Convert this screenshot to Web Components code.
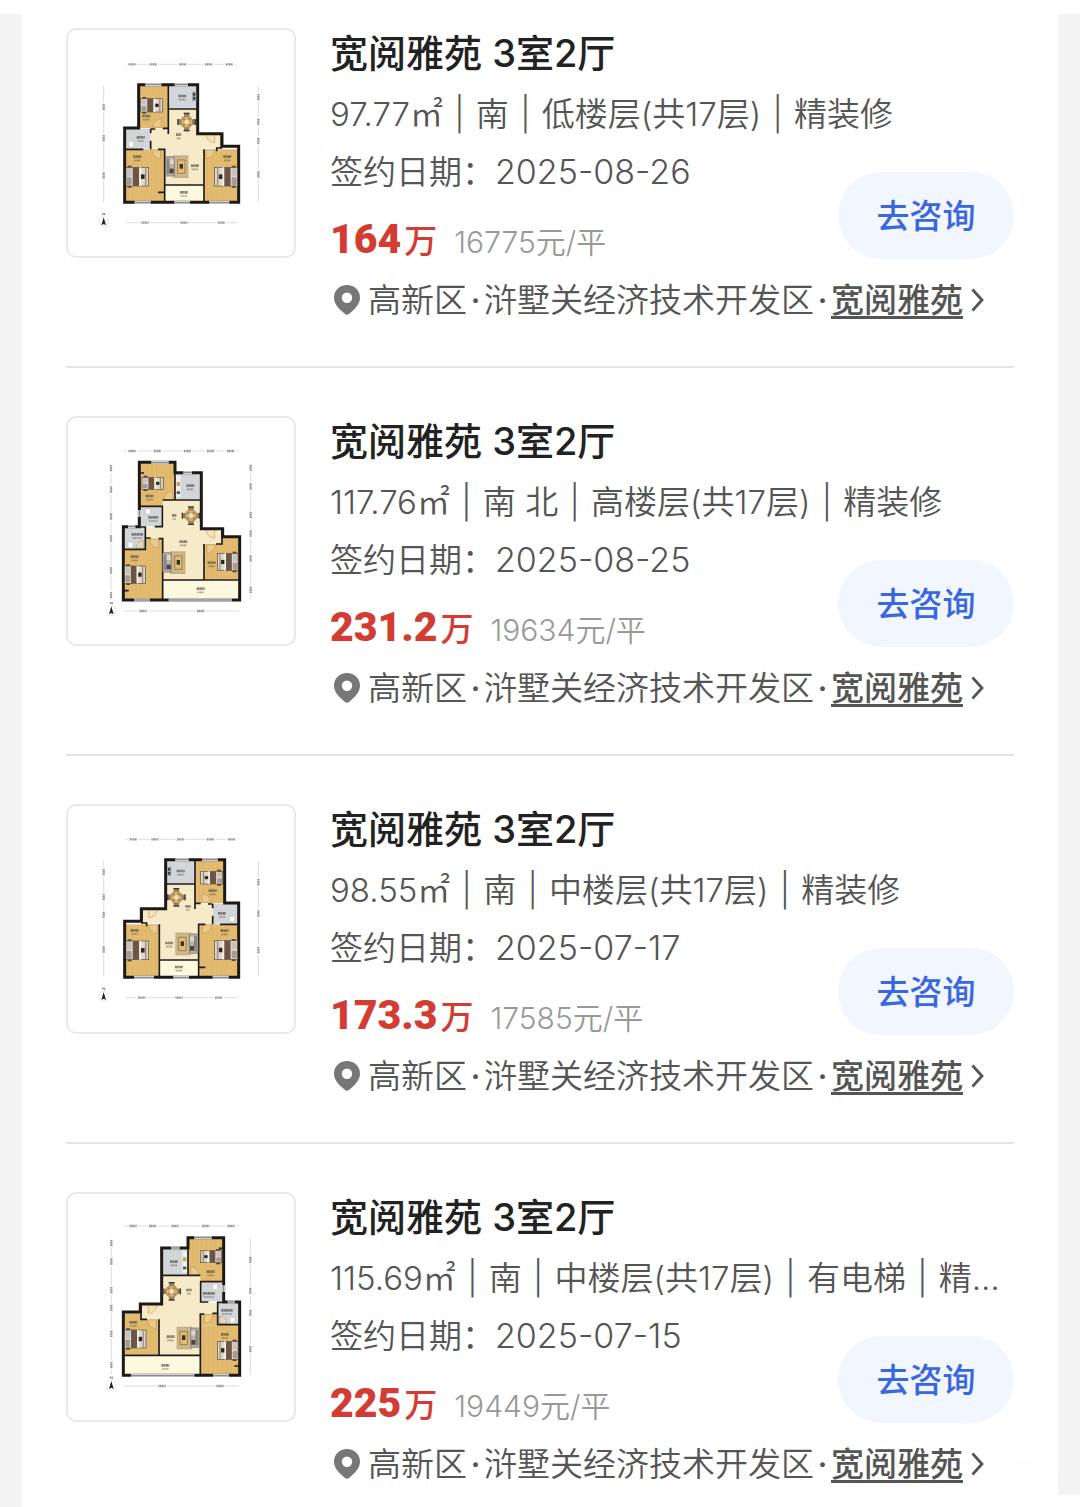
<!DOCTYPE html>
<html lang="zh-CN">
<head>
<meta charset="utf-8">
<meta name="viewport" content="width=device-width, initial-scale=1">
<title>宽阅雅苑 成交记录</title>
<style>
  body { margin: 0; background: #fff; font-family: Inter, "Noto Sans CJK SC", sans-serif; color: #555; }
  i { font-style: normal; padding: 0 2px; }
</style>
</head>
<body>
<deal-list>
  <deal-card plan="a">
    <span slot="title">宽阅雅苑 3室2厅</span>
    <span slot="spec">97.77㎡ <i>|</i> 南 <i>|</i> 低楼层(共17层) <i>|</i> 精装修</span>
    <span slot="date">2025-08-26</span>
    <span slot="price">164</span>
    <span slot="unit">16775元/平</span>
  </deal-card>
  <deal-card plan="b">
    <span slot="title">宽阅雅苑 3室2厅</span>
    <span slot="spec">117.76㎡ <i>|</i> 南 北 <i>|</i> 高楼层(共17层) <i>|</i> 精装修</span>
    <span slot="date">2025-08-25</span>
    <span slot="price">231.2</span>
    <span slot="unit">19634元/平</span>
  </deal-card>
  <deal-card plan="c">
    <span slot="title">宽阅雅苑 3室2厅</span>
    <span slot="spec">98.55㎡ <i>|</i> 南 <i>|</i> 中楼层(共17层) <i>|</i> 精装修</span>
    <span slot="date">2025-07-17</span>
    <span slot="price">173.3</span>
    <span slot="unit">17585元/平</span>
  </deal-card>
  <deal-card plan="d">
    <span slot="title">宽阅雅苑 3室2厅</span>
    <span slot="spec">115.69㎡ <i>|</i> 南 <i>|</i> 中楼层(共17层) <i>|</i> 有电梯 <i>|</i> 精装修</span>
    <span slot="date">2025-07-15</span>
    <span slot="price">225</span>
    <span slot="unit">19449元/平</span>
  </deal-card>
</deal-list>
<floating-panel></floating-panel>

<template id="list-tpl">
  <style>
    :host { display: block; padding-top: 14px; }
    .frame { background: #f4f4f5; padding: 0 22px; }
    .sheet { background: #fff; padding: 14px 44px 22px; display: flex; flex-direction: column; gap: 48px; }
  </style>
  <div class="frame"><main class="sheet"><slot></slot></main></div>
</template>

<template id="card-tpl">
  <style>
    :host { display: block; padding-bottom: 45px; border-bottom: 2px solid #e3e3e3; }
    :host(:last-child) { padding-bottom: 0; border-bottom: 0; }
    article { display: flex; gap: 34px; align-items: flex-start; }
    .body { flex: 1; min-width: 0; font-size: 33px; font-weight: 350; line-height: 58px; }
    h2 { margin: 0 0 7px; font-size: 38px; font-weight: 500; line-height: 50px; color: #222; }
    p { margin: 0; }
    .spec { white-space: nowrap; overflow: hidden; text-overflow: ellipsis; }
    .mid { display: flex; align-items: flex-start; justify-content: space-between; }
    .date { font-size: 34px; }
    .price { display: flex; align-items: baseline; height: 78px; line-height: 76px; color: #d23c32; }
    .num { font-family: Roboto, Inter, sans-serif; font-size: 41px; font-weight: 900; }
    .wan { font-weight: 500; margin: 0 17px 0 3px; }
    .unit { font-size: 30px; color: #999; }
    button { margin: 29px 0 0; width: 176px; height: 87px; padding: 0 0 4px; border: 0; border-radius: 44px;
      background: #f2f6ff; color: #3a66e0; font-family: inherit; font-size: 33px; font-weight: 500; cursor: pointer; }
    .loc { display: flex; align-items: center; line-height: 42px; white-space: nowrap; }
    .pin { width: 34px; height: 34px; margin-right: 4px; }
    .dot { width: 17px; text-align: center; font-weight: 500; }
    a { display: flex; align-items: center; gap: 8px; color: inherit; text-decoration: none; font-weight: 500; }
    a span { height: 38px; line-height: 38px; box-sizing: border-box; border-bottom: 3px solid #555; }
    .arrow { width: 13px; height: 24px; }
  </style>
  <article>
    <floor-plan></floor-plan>
    <div class="body">
      <h2><slot name="title"></slot></h2>
      <p class="spec"><slot name="spec"></slot></p>
      <div class="mid">
        <div>
          <p>签约日期：<span class="date"><slot name="date"></slot></span></p>
          <div class="price"><span class="num"><slot name="price"></slot></span><span class="wan">万</span><span class="unit"><slot name="unit"></slot></span></div>
        </div>
        <button type="button">去咨询</button>
      </div>
      <div class="loc">
        <svg class="pin" viewBox="0 0 34 34" aria-hidden="true"><path fill="#777" fill-rule="evenodd" d="M17 2C9.600 2 4 7.500 4 14.500c0 5 2.600 8.600 6 11.900l5 4.500c1.200 1.100 2.800 1.100 4 0l5-4.500c3.400-3.300 6-6.900 6-11.900C30 7.500 24.400 2 17 2Zm0 7.500a5.200 5.200 0 1 1 0 10.400a5.200 5.200 0 1 1 0-10.400Z"/></svg>
        <span>高新区</span><span class="dot">·</span><span>浒墅关经济技术开发区</span><span class="dot">·</span>
        <a href="#community"><span>宽阅雅苑</span><svg class="arrow" viewBox="0 0 13 24" aria-hidden="true"><path d="M1.500 1.500 11 12 1.500 22.500" fill="none" stroke="#555" stroke-width="2.800"/></svg></a>
      </div>
    </div>
  </article>
</template>

<template id="plan-tpl">
  <style>
    :host { display: block; flex: none; box-sizing: border-box; width: 230px; height: 230px; border: 2px solid #e9e9e9; border-radius: 10px; overflow: hidden; background: #fff; }
    svg { display: block; width: 100%; height: 100%; }
  </style>
  <svg viewBox="24 30 678 678" role="img" aria-label="户型图"></svg>
</template>

<template id="panel-tpl">
  <style>
    :host { display: block; position: fixed; right: 0; bottom: 0; width: 180px; height: 12px; background: #fff; border-radius: 20px 0 0 0; box-shadow: 0 0 90px rgba(0,0,0,.06); pointer-events: none; }
  </style>
</template>

<script>
  const stamp = (host, id) => {
    const root = host.attachShadow({ mode: 'open' });
    root.append(document.getElementById(id).content.cloneNode(true));
    return root;
  };

  const WOOD = '#e2bb70', CREAM = '#f6eac8', TILE = '#d3d6d9', PALE = '#fdf9df', WALL = '#1c1916';
  const R = (x, y, w, h, f, extra = '') => `<rect x="${x}" y="${y}" width="${w}" height="${h}" fill="${f}" ${extra}/>`;

  // Furniture: every piece is drawn around its top left corner.
  const bed = (x, y, w, h, flip) => {
    const inner = R(0, 0, w, h, '#ded5cb', 'stroke="#54483f" stroke-width="2"') +
      R(2, 3, w * .22, h / 2 - 5, '#c9c2ba', 'rx="4"') + R(2, h / 2 + 2, w * .22, h / 2 - 5, '#a49b92', 'rx="4"') +
      R(w * .3, 0, w * .28, h, '#6a5547') + R(w * .58, 0, w * .1, h, '#f1ebe4') +
      R(w * .66, h * .38, w * .16, h * .24, '#2c2622') + R(w * .84, 0, w * .06, h, '#a08d7c') +
      R(w * .07, -5, 12, 5, '#54483f') + R(w * .07, h, 12, 5, '#54483f');
    return `<g transform="translate(${flip ? x + w : x} ${y}) scale(${flip ? -1 : 1} 1)">${inner}</g>`;
  };
  const table = (cx, cy) => {
    const chair = a => `<g transform="rotate(${a})"><rect x="-8" y="-27" width="16" height="12" rx="2" fill="#8c8175"/><rect x="-9" y="-28" width="18" height="4" fill="#3f3730"/></g>`;
    return `<g transform="translate(${cx} ${cy})">${[0, 90, 180, 270].map(chair).join('')}<circle r="18" fill="#d9ad62" stroke="#8f6c3a" stroke-width="2"/><circle r="7" fill="#ece3d2"/>` +
      [45, 135, 225, 315].map(a => `<circle r="4" cy="-12" transform="rotate(${a})" fill="#a88a5a"/>`).join('') + '</g>';
  };
  const sofa = (x, y, flip) => `<g transform="translate(${flip ? x + 68 : x} ${y}) scale(${flip ? -1 : 1} 1)">` +
    R(22, 0, 46, 68, '#c3ab84') + R(26, 4, 38, 60, '#cdb791') +
    R(0, 4, 26, 58, '#b9b2a9', 'stroke="#6d655d" stroke-width="2" rx="3"') + R(3, 10, 9, 46, '#8f877f') +
    R(12, 12, 12, 14, '#dcd7d0') + R(12, 40, 12, 14, '#4b443e') + R(36, 14, 22, 40, '#dfbd77', 'stroke="#a17e42" stroke-width="3"') +
    R(42, 26, 10, 14, '#37302a') + '</g>';
  const door = (x, y, sx, sy, r = 26) => `<g transform="translate(${x} ${y}) scale(${sx} ${sy})"><path d="M0 0V${r}A${r} ${r} 0 0 0 ${r} 0Z" fill="#f4dca5" fill-opacity=".5" stroke="#b68c4c" stroke-width="1.500"/></g>`;
  const toilet = (x, y) => R(x, y, 15, 17, '#fff', 'stroke="#aaa" stroke-width="1.500" rx="3"');
  // Room captions are far below reading size, so they are two strokes of ink.
  const mark = (x, y, w = 24) => `<path d="M${x - w / 2} ${y}h${w}" stroke="#4c4438" stroke-width="8" stroke-dasharray="7 1 5 1" opacity=".65"/><path d="M${x - w / 2 + 2} ${y + 11}h${w - 4}" stroke="#4c4438" stroke-width="5" stroke-dasharray="3 1" opacity=".5"/>`;
  const grain = (x, y, w, h) => {
    let s = R(x, y, w, h, WOOD);
    for (let i = 8; i < w; i += 14) s += `<path d="M${x + i} ${y}v${h}" stroke="#d5a651" stroke-width="1" opacity=".6"/>`;
    return s;
  };
  const wall = d => `<path d="${d}" fill="none" stroke="${WALL}" stroke-width="9" stroke-linecap="square"/>`;
  const thin = d => `<path d="${d}" fill="none" stroke="${WALL}" stroke-width="5"/>`;
  const windows = d => `<path d="${d}" fill="none" stroke="#e9e9e9" stroke-width="9"/><path d="${d}" fill="none" stroke="#8b8b8b" stroke-width="4"/>`;
  const ruler = (vertical, at, from, to, marks) => {
    const line = vertical ? `M${at} ${from}V${to}` : `M${from} ${at}H${to}`;
    return `<path d="${line}" stroke="#bbb" stroke-width="1.500"/>` + marks.map(m => vertical
      ? R(at - 5, m - 14, 10, 28, '#fff') + `<path d="M${at} ${m - 10}v20" stroke="#999" stroke-width="7" stroke-dasharray="4 1"/>`
      : R(m - 15, at - 5, 30, 10, '#fff') + `<path d="M${m - 11} ${at}h22" stroke="#999" stroke-width="7" stroke-dasharray="4 1"/>`).join('');
  };
  const north = (x, y) => `<circle cx="${x}" cy="${y}" r="15" fill="#fff" stroke="#ddd" stroke-width="2"/><path d="M${x} ${y - 13}l7 24-7-4-7 4Z" fill="#222"/><path d="M${x - 3} ${y - 20}v-6l6 6v-6" stroke="#555" stroke-width="2" fill="none"/>`;

  const shellAC = grain(234, 194, 90, 130) + R(328, 196, 86, 70, TILE) + R(196, 326, 76, 60, TILE) +
    R(326, 268, 88, 225, CREAM) + R(272, 326, 56, 60, CREAM) + R(314, 342, 120, 152, CREAM) + R(410, 342, 74, 42, CREAM) +
    grain(196, 388, 116, 158) + grain(434, 388, 100, 158) + R(316, 498, 116, 48, PALE) +
    door(304, 322, -1, -1) + door(302, 390, -1, 1) + door(464, 342, -1, 1) + door(438, 390, 1, 1) +
    thin('M325 196V342M325 267H412M196 388H250M272 327H286M308 325H325M272 326V340M272 362V388M294 388H314V546M314 495H434M432 388V546M484 342V384H470V394M294 517H314') +
    wall('M236 324V194H413V341H486V379H536V547H194V324H234') +
    windows('M256 194H304M344 194H384M224 547H272M343 547H390M448 547H508');
  const kitchenAC = R(396, 215, 13, 28, '#9ea3a8') + R(399, 219, 7, 8, '#444') + R(399, 231, 7, 8, '#444') + toilet(206, 364);

  const shellBD = grain(240, 166, 104, 128) + R(348, 198, 74, 76, TILE) + R(242, 298, 62, 56, TILE) + R(192, 360, 64, 62, TILE) +
    R(308, 276, 114, 240, CREAM) + R(256, 358, 56, 34, CREAM) + R(420, 364, 66, 44, CREAM) + R(420, 404, 14, 112, CREAM) +
    grain(192, 426, 114, 148) + R(256, 392, 50, 34, WOOD) + grain(434, 408, 102, 106) + R(488, 390, 48, 20, WOOD) + R(308, 518, 230, 56, PALE) +
    door(338, 276, -1, -1) + door(296, 394, -1, 1) + door(464, 364, -1, 1) + door(440, 410, 1, 1) + door(250, 420, -1, -1, 22) +
    thin('M345 166V276H308M308 276H424M240 295H307V356H284M242 357H256V390H272M296 392H308V574M192 424H256V390M308 516H536M432 408V516M486 364V408H468M192 548H206M242 195H252') +
    wall('M238 324V163H345V194H424V362H488V386H539V576H190V356H238V324') +
    windows('M274 163H326M370 194H396M238 306V326M204 356H226M222 576H270M326 576H516');
  const kitchenBD = R(348, 202, 14, 66, '#eef0f1') + R(350, 222, 10, 12, '#bca94e') + R(350, 250, 10, 8, '#555') + toilet(256, 302) + toilet(204, 402);

  const mirror = (axis, dy, s) => `<g transform="translate(${axis} ${dy}) scale(-1 1)">${s}</g>`;

  const PLANS = {
    a: shellAC + kitchenAC + bed(242, 236, 66, 40) + bed(198, 442, 68, 56) + bed(464, 442, 68, 56, true) + table(380, 306) + sofa(317, 406) +
      mark(367, 228) + mark(259, 288) + mark(242, 352) + mark(232, 410) + mark(502, 410) + mark(372, 517) + mark(405, 437) + mark(356, 344, 16) +
      ruler(false, 133, 196, 530, [216, 280, 368, 446, 508]) + ruler(true, 131, 198, 546, [262, 355, 467]) +
      ruler(true, 595, 198, 546, [232, 306, 363, 464]) + ruler(false, 608, 196, 532, [255, 372, 484]) + north(131, 605),
    b: shellBD + kitchenBD + bed(246, 208, 64, 36) + bed(194, 474, 62, 52) + bed(472, 436, 62, 52, true) + table(393, 323) + sofa(308, 430) +
      mark(391, 233) + mark(269, 264) + mark(280, 328, 30) + mark(232, 379, 34) + mark(224, 446) + mark(455, 464) + mark(422, 542) + mark(370, 401) + mark(343, 322, 14) +
      ruler(false, 129, 192, 536, [216, 292, 382, 452, 512]) + ruler(true, 153, 166, 570, [181, 245, 326, 392, 488, 562]) +
      ruler(true, 572, 166, 574, [180, 236, 322, 377, 452, 546]) + ruler(false, 609, 192, 538, [249, 422]) + north(154, 608),
    c: mirror(730, -3, shellAC + kitchenAC) + bed(422, 226, 66, 38, true) + bed(198, 435, 68, 56) + bed(464, 434, 68, 56, true) + table(349, 304) + sofa(346, 410, true) +
      mark(362, 225) + mark(458, 284) + mark(486, 352) + mark(224, 403) + mark(494, 404) + mark(357, 513) + mark(328, 441) + mark(384, 331, 16) +
      ruler(false, 130, 196, 530, [220, 285, 362, 451, 515]) + ruler(true, 131, 195, 542, [229, 304, 357, 461]) +
      ruler(true, 595, 195, 542, [259, 353, 463]) + ruler(false, 605, 196, 532, [245, 357, 476]) + north(131, 601),
    d: mirror(729, -2, shellBD + kitchenBD) + bed(421, 200, 64, 36, true) + bed(194, 438, 64, 54) + bed(472, 472, 62, 54, true) + table(335, 322) + sofa(350, 428, true) +
      mark(342, 233) + mark(452, 263) + mark(447, 328, 36) + mark(501, 379, 34) + mark(220, 415) + mark(495, 451) + mark(316, 544) + mark(332, 458) + mark(387, 318, 16) +
      ruler(false, 126, 192, 536, [219, 278, 345, 437, 513]) + ruler(true, 154, 162, 570, [178, 233, 319, 372, 450, 544]) +
      ruler(true, 571, 162, 572, [228, 321, 387, 496]) + ruler(false, 606, 192, 536, [306, 480]) + north(154, 604)
  };

  customElements.define('deal-list', class extends HTMLElement {
    constructor() { super(); stamp(this, 'list-tpl'); }
  });
  customElements.define('floor-plan', class extends HTMLElement {
    static observedAttributes = ['name'];
    constructor() { super(); stamp(this, 'plan-tpl'); }
    attributeChangedCallback(_, __, name) { this.shadowRoot.querySelector('svg').innerHTML = PLANS[name] || ''; }
  });
  customElements.define('deal-card', class extends HTMLElement {
    constructor() { super(); stamp(this, 'card-tpl'); }
    connectedCallback() { this.shadowRoot.querySelector('floor-plan').setAttribute('name', this.getAttribute('plan')); }
  });
  customElements.define('floating-panel', class extends HTMLElement {
    constructor() { super(); stamp(this, 'panel-tpl'); }
  });
</script>
</body>
</html>
